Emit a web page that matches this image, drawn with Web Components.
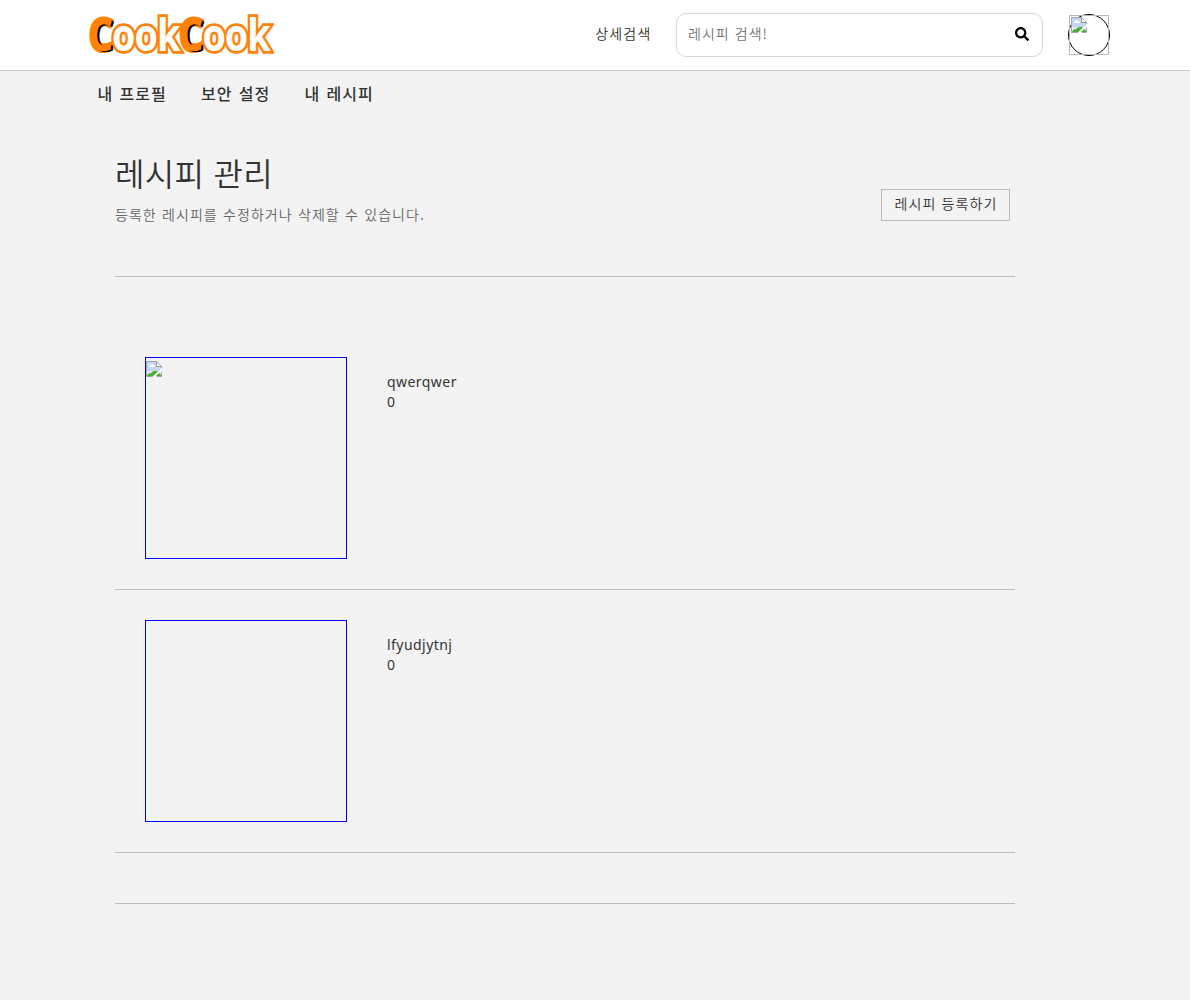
<!DOCTYPE html>
<html lang="ko">
<head>
<meta charset="utf-8">
<title>CookCook</title>
<style>
body{margin:0;background:#f3f3f3;color:#333;font:350 14px/20px "Noto Sans CJK KR","Noto Sans",sans-serif}
</style>
</head>
<body>
<cook-page></cook-page>
<script>
const define=(name,html)=>{
  const t=document.createElement('template');t.innerHTML=html;
  customElements.define(name,class extends HTMLElement{
    constructor(){super();this.attachShadow({mode:'open'}).append(t.content.cloneNode(true));}
  });
};
define('missing-image',`<style>:host{display:block;width:16px;height:16px}svg{display:block}</style>
<svg width="16" height="16" viewBox="0 0 16 16"><path d="M.5.5h10l5 5v10H.5z" fill="#c4d7f5"/><path d="M1 10h14v5H1z" fill="#e1eaf5"/><path d="M3 6q0-2 2-2 1-2 2 0 2 0 2 2z" fill="#fff"/><path d="M1 15q1-3 4-3 3-3 6-2l4 4v1z" fill="#4ead36"/><path d="M16 7v2l-7 7H6z" fill="#fff"/><path d="M10.5.5v5h5" fill="#fff" stroke="#999"/><path d="M15.5 7V5.5l-5-5H.5v15H7M11 15.5h4.5V11" fill="none" stroke="#a3a3a3"/></svg>`);
define('cook-logo',`<style>:host{display:block;width:190px;height:70px}
div{width:max-content;margin-left:1px;font:700 44px/69px "Open Sans","Noto Sans",sans-serif;letter-spacing:-1.200px;transform:scaleX(.86);transform-origin:0 0;white-space:nowrap;color:#fff;-webkit-text-stroke:5.500px #ff8208;paint-order:stroke fill;stroke-linejoin:round}
b{font-weight:700;color:#ff8208;-webkit-text-stroke-width:4px;text-shadow:2.500px 1px 0 #000}i{font-style:normal;position:relative}</style>
<div><b>C</b><i>ook</i><b>C</b><i>ook</i></div>`);
define('search-box',`<style>:host{display:flex;box-sizing:border-box;width:367px;height:44px;border:1px solid #d5d5d5;border-radius:10px;padding:0 13px 0 11px;align-items:center;justify-content:space-between;color:#757575;letter-spacing:1.050px}span{margin-top:-4px}svg{margin-top:-2px}</style>
<span>레시피 검색!</span><svg width="14" height="14" viewBox="0 0 512 512"><path d="M505 442.7 405.3 343c-4.500-4.500-10.600-7-17-7H372c27.600-35.300 44-79.700 44-128C416 93.100 322.900 0 208 0S0 93.100 0 208s93.100 208 208 208c48.300 0 92.700-16.400 128-44v16.300c0 6.400 2.500 12.500 7 17l99.700 99.700c9.400 9.400 24.600 9.400 33.900 0l28.300-28.300c9.400-9.400 9.400-24.600.1-34zM208 336c-70.700 0-128-57.200-128-128 0-70.700 57.200-128 128-128 70.700 0 128 57.200 128 128 0 70.700-57.200 128-128 128z"/></svg>`);
define('user-avatar',`<style>:host{display:block;width:42px;height:42px;box-sizing:border-box;border:1px solid #000;border-radius:50%}div{width:40px;height:40px;box-sizing:border-box;border:1px solid #b8b8b8;padding:1px}</style><div><missing-image></missing-image></div>`);
define('site-header',`<style>:host{display:flex;box-sizing:border-box;height:71px;background:#fff;border-bottom:1px solid #c8c8c8;padding:0 80px 0 88px;align-items:center}
cook-logo{margin-right:auto}.link{letter-spacing:1.2px;margin:-4px 24.500px 0 0}user-avatar{margin-left:25px}</style>
<cook-logo></cook-logo><span class="link">상세검색</span><search-box></search-box><user-avatar></user-avatar>`);
define('profile-nav',`<style>:host{display:flex;box-sizing:border-box;height:45px;padding:0 0 2px 97.500px;align-items:center;font-size:16px;font-weight:500;letter-spacing:1.100px;word-spacing:.5px}span{width:103.500px}</style><span>내 프로필</span><span>보안 설정</span><span>내 레시피</span>`);
define('page-heading',`<style>:host{display:flex;box-sizing:border-box;height:161px;border-bottom:1px solid #bfbfbf;padding:34px 5px 0 0;justify-content:space-between}
h1{margin:0 0 9px;font-weight:350;font-size:32px;line-height:45px;letter-spacing:.3px;word-spacing:0}p{margin:0;color:#666;letter-spacing:1.050px;word-spacing:.3px}
button{font:inherit;color:#333;background:none;border:1px solid #bbb;height:32px;width:129px;padding:0 0 4px 1px;margin-top:39px;letter-spacing:1.100px;white-space:nowrap}</style>
<div><h1>레시피 관리</h1><p>등록한 레시피를 수정하거나 삭제할 수 있습니다.</p></div><button>레시피 등록하기</button>`);
define('recipe-row',`<style>:host{display:flex;box-sizing:border-box;height:263px;padding:30px;border-bottom:1px solid #bfbfbf}
.pic{box-sizing:border-box;width:202px;height:202px;border:1px solid #00f;padding-top:3px}.info{margin:15px 0 0 40px;font-family:"Noto Sans",sans-serif;font-weight:400;font-size:14px;letter-spacing:.45px}</style>
<div class="pic"><slot name="pic"></slot></div><div class="info"><div><slot></slot></div><div>0</div></div>`);
define('cook-page',`<style>:host{display:block}main{width:900px;margin-left:115px}.list{padding:50px 0;border-bottom:1px solid #bfbfbf}</style>
<site-header></site-header><profile-nav></profile-nav><main><page-heading></page-heading><div class="list"><recipe-row>qwerqwer<missing-image slot="pic"></missing-image></recipe-row><recipe-row>lfyudjytnj</recipe-row></div></main>`);
</script>
</body>
</html>
